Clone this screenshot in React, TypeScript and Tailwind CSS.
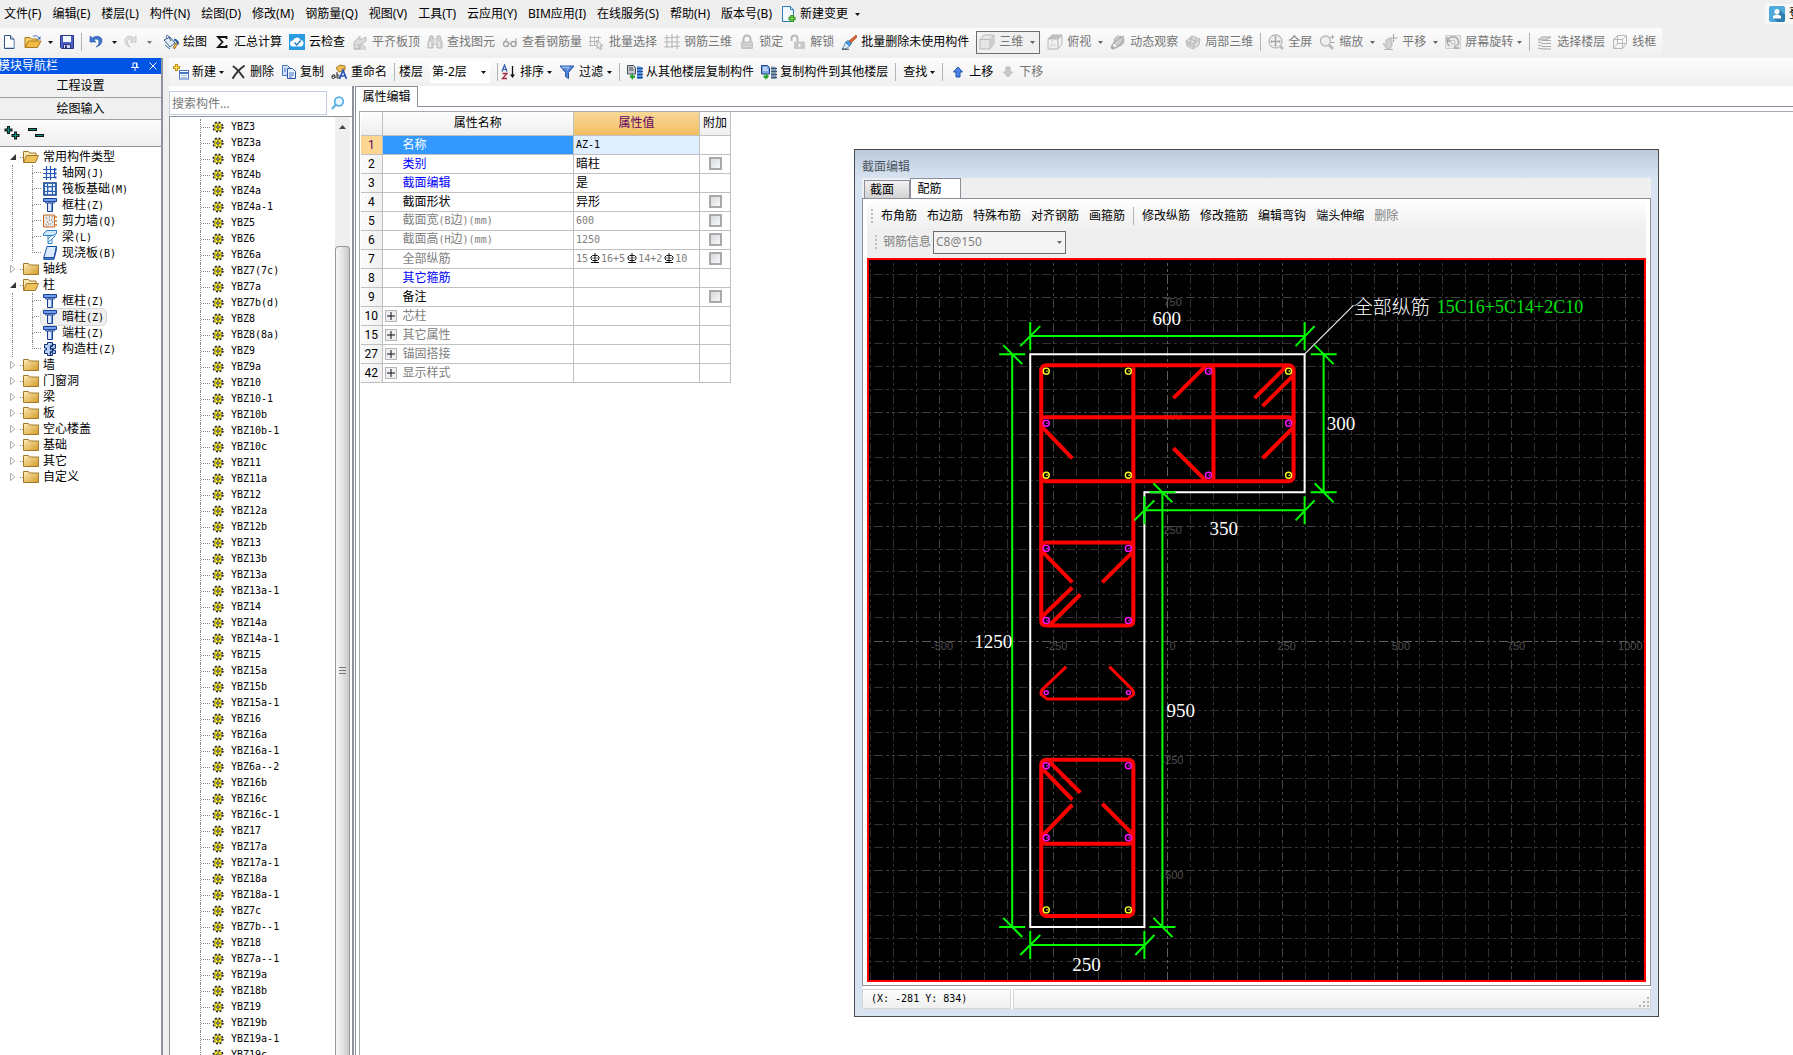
import React from "react";

const CJK = "font-['Noto_Sans','Noto_Sans_CJK_SC',sans-serif]";

/* ---------- shared helpers ---------- */

function Svg({ children, w = 16, h = 16, className = "" }: { children: React.ReactNode; w?: number; h?: number; className?: string }) {
  return (
    <svg width={w} height={h} viewBox={`0 0 ${w} ${h}`} className={`shrink-0 ${className}`} aria-hidden="true">
      {children}
    </svg>
  );
}

function Caret({ color = "#111" }: { color?: string }) {
  return (
    <Svg w={5} h={3}>
      <path d="M0 0h5L2.5 3z" fill={color} />
    </Svg>
  );
}

/* Half-width characters are set in a 6px wide monospace face beside 12px ideographs. */
function Mixed({ text }: { text: string }) {
  const runs = text.match(/[\x20-\x7e]+|[^\x20-\x7e]+/g) ?? [];
  return (
    <>
      {runs.map((r, i) =>
        r.charCodeAt(0) < 127 ? (
          <span key={i} className="font-['DejaVu_Sans_Mono',monospace] text-[10px]">{r}</span>
        ) : (
          <span key={i}>{r}</span>
        )
      )}
    </>
  );
}

function Sep() {
  return <span className="h-[18px] w-px shrink-0 bg-[#b4b4b4]" />;
}

function Grip() {
  return <span className="h-[15px] w-0.5 shrink-0 bg-[repeating-linear-gradient(180deg,#bdbdbd_0_2px,transparent_2px_4px)]" />;
}

/* ---------- icons ---------- */

const g = "#b9b9b9";
const I = {
  file: (
    <Svg>
      <path d="M2.5 1.5h6l3.5 3.5v9.500h-9.500z" fill="#fff" stroke="#31527f" />
      <path d="M3.500 13.500h8V6" fill="none" stroke="#b9d3ee" />
      <path d="M8.500 1.500V5H12" fill="#d6e5f5" stroke="#31527f" />
    </Svg>
  ),
  open: (
    <Svg w={18}>
      <path d="M1 13V3.500h5l1.500 1.500H13v3" fill="#f6cf6c" stroke="#a97817" />
      <path d="M1 13.500L4.500 7H17l-3.500 6.500z" fill="#f4b942" stroke="#a97817" />
      <path d="M9 2.500c3-1.500 5-.5 6 1.500" fill="none" stroke="#3f6fae" />
      <path d="M16.500 2v3.500H13z" fill="#3f6fae" />
    </Svg>
  ),
  save: (
    <Svg>
      <path d="M1.500 1.500h13v13h-12l-1-1z" fill="#4d5fc9" stroke="#2a357f" />
      <path d="M4 2h8v6H4z" fill="#f2f6ff" />
      <path d="M4.500 10.500h7v4h-7z" fill="#cfd6ee" stroke="#2a357f" />
      <path d="M6 11.500h2v3H6z" fill="#2a357f" />
    </Svg>
  ),
  undo: (
    <Svg>
      <path d="M2 2v6h6L5.800 5.900C8 4.300 11 5 11 8c0 2-1 3.500-3 5 4-1.200 6-3.500 6-6.500C14 2.500 8.500.800 4.300 4z" fill="#3f74cf" stroke="#27539f" strokeWidth=".6" />
    </Svg>
  ),
  redo: (
    <Svg>
      <path d="M13 2v6H7l2.200-2.100C7 4.300 4.500 5 4.500 8c0 2 1 3.500 2.500 5-3.500-1.200-5-3.500-5-6.500C2 2.500 7 .800 10.700 4z" fill="#e2e2e2" stroke="#bcbcbc" strokeWidth=".8" />
    </Svg>
  ),
  draw: (
    <Svg>
      <path d="M1 6l6-3 5 6-5 4z" fill="#dfeaf7" stroke="#38618f" />
      <path d="M4 5C2 1 5 0 6 3l2 4" fill="none" stroke="#38618f" />
      <path d="M10 14l4-7 1.500 1-3.500 6.500z" fill="#f4b942" stroke="#7a571b" strokeWidth=".7" />
      <path d="M11 5.500c3 .5 4 2 4 5" fill="none" stroke="#2b5fa8" strokeWidth="2" />
      <path d="M2 11l5 4" stroke="#38618f" />
    </Svg>
  ),
  sigma: (
    <Svg>
      <path d="M12.500 5V3H4l4.500 5L4 13h8.500v-2" fill="none" stroke="#111" strokeWidth="1.800" />
    </Svg>
  ),
  cloud: (
    <Svg>
      <rect width="16" height="16" fill="#2a9be0" />
      <path d="M4 12.500a3 3 0 010-6 4 4 0 017.500-.5 3.300 3.300 0 01.5 6.500z" fill="#fff" />
      <path d="M5.500 8.500l2.200 2.500 4-4.500" fill="none" stroke="#1b79bd" strokeWidth="1.300" />
    </Svg>
  ),
  slab: (
    <Svg>
      <path d="M2 8l6-6v4l6-3v4L8 11v4H2z" fill="#dcdcdc" stroke={g} />
      <path d="M2 15h12M4 11h8M6 13h8" stroke={g} />
    </Svg>
  ),
  binoc: (
    <Svg>
      <path d="M3 2h3v3h4V2h3l2 7v5h-5v-4H6v4H1V9z" fill="#d2d2d2" stroke={g} />
      <path d="M3 8v5M12 8v5M8 5v5" stroke="#fff" />
    </Svg>
  ),
  glasses: (
    <Svg>
      <circle cx="4" cy="10" r="2.500" fill="none" stroke="#a5a5a5" strokeWidth="1.400" />
      <circle cx="11.500" cy="10" r="2.500" fill="none" stroke="#a5a5a5" strokeWidth="1.400" />
      <path d="M6.500 9.500h2.500M1.800 9L5 4.500M14 9.500V4.500" fill="none" stroke="#a5a5a5" strokeWidth="1.200" />
    </Svg>
  ),
  batch: (
    <Svg>
      <path d="M1.500 2v10M5.500 2v10M9.500 2v5M0 3.500h12M0 7.500h8M0 11.500h7" stroke={g} />
      <path d="M8 6l6 6h-3l1.500 3-1.500.5L9.500 13 8 14.500z" fill="#eee" stroke="#aaa" />
    </Svg>
  ),
  grid: (
    <Svg>
      <path d="M3 1v13M8 0v14M13 1v14M0 4l16-1M0 8h16M0 13l16-1" fill="none" stroke={g} strokeWidth="1.200" />
    </Svg>
  ),
  lock: (
    <Svg>
      <path d="M4.500 8V5a3.500 3.500 0 017 0v3" fill="none" stroke={g} strokeWidth="2" />
      <rect x="2" y="7.500" width="12" height="7.500" rx="1" fill="#c4c4c4" />
      <path d="M3 10h10M3 12.500h10" stroke="#dedede" />
    </Svg>
  ),
  unlock: (
    <Svg>
      <path d="M1.500 7V4.500a3 3 0 016 0V8" fill="none" stroke={g} strokeWidth="2" />
      <rect x="4" y="7.500" width="11" height="7.500" rx="1" fill="#c9c9c9" />
      <path d="M9.500 10v3" stroke="#fff" strokeWidth="1.500" />
    </Svg>
  ),
  brush: (
    <Svg>
      <path d="M15 1L8 7l2 2 6-6z" fill="#e2622d" stroke="#8e3a1d" strokeWidth=".6" />
      <path d="M7 6.500l3.500 3-2 2.500-4-3.500z" fill="#4aa3e8" stroke="#225f9d" strokeWidth=".7" />
      <path d="M4.500 8.500l4 3.500c-2 2.500-4 3-7.500 3 2-2 2-4 3.500-6.500z" fill="#d9ecfb" stroke="#225f9d" strokeWidth=".7" />
      <path d="M1 15.300h7" stroke="#444" />
    </Svg>
  ),
  box: (
    <Svg>
      <path d="M1 5.500L5 1h10v9l-4 5H1z" fill="#e6e6e6" stroke={g} strokeLinejoin="round" />
      <path d="M1 5.500h10V15M11 5.500L15 1" fill="none" stroke={g} />
      <path d="M11 6l4-4v8l-4 5z" fill="#cdcdcd" />
    </Svg>
  ),
  topview: (
    <Svg>
      <path d="M1 5L5 1h10l-4 4z" fill="#c2c2c2" stroke={g} />
      <path d="M1 5h10v10H1zM11 5l4-4v9l-4 5" fill="#f0f0f0" stroke={g} />
      <path d="M5 6v5h6M5 11l-4 4" fill="none" stroke={g} strokeDasharray="1 1" />
    </Svg>
  ),
  orbit: (
    <Svg>
      <circle cx="9" cy="7" r="5" fill="#cfcfcf" stroke={g} />
      <path d="M1 14c1-4 6-9 13-12M2 15c5-1 10-5 12-11" fill="none" stroke="#a9a9a9" strokeWidth="1.300" />
      <path d="M1 15l1-4 3 3z" fill="#aaa" />
    </Svg>
  ),
  partial: (
    <Svg>
      <path d="M1 7l6-5 8 3-1 6-6 4-6-3z" fill="#dedede" stroke={g} />
      <path d="M4 4.500l8 3M2 9.500l7 3M7 2l-3 10M11 3.500L8 15M1 7l7 3 7-5" fill="none" stroke={g} />
    </Svg>
  ),
  full: (
    <Svg>
      <circle cx="7.500" cy="7.500" r="6.500" fill="#f1f1f1" stroke={g} strokeWidth="1.300" />
      <path d="M7.500 3v9M3 7.500h9" stroke="#a5a5a5" strokeWidth="1.300" />
      <path d="M7.500 2L9 4H6zM7.500 13L9 11H6zM2 7.500L4 6v3zM13 7.500L11 6v3z" fill="#a5a5a5" />
      <path d="M12 12l3 3" stroke={g} strokeWidth="2.500" />
    </Svg>
  ),
  zoom: (
    <Svg>
      <circle cx="6.500" cy="7" r="5" fill="#f1f1f1" stroke={g} strokeWidth="1.400" />
      <path d="M10 11l4 4" stroke={g} strokeWidth="2.500" />
      <path d="M11.500 3h4M13.500 1v4M11.500 8.500h4" stroke="#a5a5a5" />
    </Svg>
  ),
  pan: (
    <Svg>
      <path d="M1 10c2-1 2 1 3 1V6l2-1 1-.5 2 .5 1 2v4l-2 4H5z" fill="#d2d2d2" stroke={g} />
      <path d="M11.500 0v8M7.500 4h8" stroke="#a5a5a5" />
      <path d="M2 15.500h9" stroke={g} />
    </Svg>
  ),
  rotate: (
    <Svg>
      <path d="M.5 1.500h15v13H.5z" fill="#eaeaea" stroke="#cfcfcf" />
      <path d="M4.500 12A5 5 0 018 3a5 5 0 013.500 9" fill="none" stroke="#a5a5a5" strokeWidth="1.300" />
      <path d="M2 3v4h4M14 14h-4v-3.500" fill="none" stroke="#a5a5a5" strokeWidth="1.300" />
      <circle cx="8" cy="8" r="1.800" fill="#fff" stroke={g} />
    </Svg>
  ),
  floors: (
    <Svg>
      <path d="M5 3h9L9 6H1zM14 6.500H5M14 9.500H5M14 12.500H5M1 8l4 1M1 11l4 1M1 14l4 1h9" fill="#dadada" stroke="#a9a9a9" />
    </Svg>
  ),
  wire: (
    <Svg>
      <path d="M1.500 5.500L5.500 1.500h9v8l-4 5h-9zM1.500 5.500h9v9M10.500 5.500l4-4M5.500 1.500v8h9M5.500 9.500l-4 5" fill="none" stroke={g} />
    </Svg>
  ),
  newItem: (
    <Svg>
      <path d="M3.500 0v7M0 3.500h7" stroke="#b98510" strokeWidth="3" />
      <path d="M3.500 .8v5.400M.8 3.500h5.400" stroke="#ffdb4d" strokeWidth="1.400" />
      <rect x="6.500" y="6.500" width="9" height="8.500" fill="#fff" stroke="#4a76c2" />
      <path d="M7 9h8" stroke="#4a76c2" strokeWidth="2" />
      <path d="M8 11.500h6M8 13.500h6" stroke="#9ebbe5" />
    </Svg>
  ),
  del: (
    <Svg>
      <path d="M2.500 2.500C6 5 9 8.500 12.500 13.500M13 2C8 5.500 5 9 2 14" fill="none" stroke="#333" strokeWidth="2" strokeLinecap="round" />
    </Svg>
  ),
  copy: (
    <Svg>
      <path d="M1.500 1.500h5l3 3v7h-8z" fill="#cfe0f7" stroke="#4a76c2" />
      <path d="M6.500 4.500h5l3 3v7h-8z" fill="#e9f2ff" stroke="#2b56a6" />
      <path d="M8 9h5M8 11h5M8 13h3M3 5h2M3 7h2" stroke="#4a76c2" />
    </Svg>
  ),
  rename: (
    <Svg>
      <path d="M5 4l4-3 5 1v4l-6 2z" fill="#f3bd4c" stroke="#8e6415" strokeWidth=".8" />
      <path d="M1 13c0-3 3-3 3-1v2M4 12c-2 0-3 0-3 1.500S3.500 15 4 13M6 8v6c3 1 3-4 0-3" fill="none" stroke="#222" />
      <path d="M8.500 15L12 6l3.500 9M9.500 12h5" fill="none" stroke="#2b56b6" strokeWidth="1.700" />
    </Svg>
  ),
  sort: (
    <Svg>
      <path d="M1 7.500L3.500 1 6 7.500M2 5.500h3" fill="none" stroke="#2c56a8" strokeWidth="1.200" />
      <path d="M1.500 9.500H6l-4.500 5H6" fill="none" stroke="#a02a3c" strokeWidth="1.300" />
      <path d="M11.500 2v10" stroke="#111" strokeWidth="1.300" />
      <path d="M9 10.500h5L11.500 14z" fill="#111" />
    </Svg>
  ),
  filter: (
    <Svg>
      <path d="M1 2h14L9.500 8.500v6l-3-2v-4z" fill="#4f86dc" stroke="#2b56a6" strokeLinejoin="round" />
      <path d="M3 3.200h7L8 6" fill="none" stroke="#bcd5fb" />
    </Svg>
  ),
  copyFrom: (
    <Svg>
      <path d="M.5 1.500h6l2 2V10h-8z" fill="#c4c8cf" stroke="#4b4f58" />
      <path d="M2 4h4M2 6h5" stroke="#555" />
      <path d="M2.500 12.500L6 9v2.500h2v2.500H6V16z" fill="#28a22e" />
      <path d="M10 2l5 1v12h-5z" fill="#69a4e8" />
      <path d="M10 4.500h6M10 7.500h6M10 10.500h6M10 13.500h6" stroke="#1d4f9f" strokeWidth="1.300" />
    </Svg>
  ),
  copyTo: (
    <Svg>
      <path d="M.5 1.500h6l2 2V10h-8z" fill="#79a4e6" stroke="#1d3f88" />
      <path d="M2 4h4M2 6h5" stroke="#fff" />
      <path d="M8 12.500L4.500 9v2.500h-2v2.500h2V16z" fill="#28a22e" />
      <path d="M10 2l5 1v12h-5z" fill="#9fb1c7" />
      <path d="M10 4.500h6M10 7.500h6M10 10.500h6M10 13.500h6" stroke="#3d5676" strokeWidth="1.300" />
    </Svg>
  ),
  up: (
    <Svg>
      <path d="M8 3l4.500 5H10v5H6V8H3.500z" fill="#4e83e6" stroke="#1f4fae" strokeLinejoin="round" />
    </Svg>
  ),
  down: (
    <Svg>
      <path d="M8 13l4.500-5H10V3H6v5H3.500z" fill="#c9c9c9" stroke="#bcbcbc" strokeLinejoin="round" />
    </Svg>
  ),
  change: (
    <Svg>
      <path d="M1.500.5h8l3 3v12h-11z" fill="#f3f9ff" stroke="#2d7db8" />
      <path d="M9.500.5v3h3" fill="#cfe6f8" stroke="#2d7db8" />
      <path d="M11 9v7M7.500 12.500h7" stroke="#37941f" strokeWidth="3.500" />
      <path d="M11 10v5M8.500 12.500h5" stroke="#7ed957" strokeWidth="1.200" />
    </Svg>
  ),
  user: (
    <Svg>
      <rect width="16" height="16" rx="2" fill="#4ea9dc" />
      <path d="M10 3l6 6v5a2 2 0 01-2 2H8l-4-4z" fill="#2e7fb0" />
      <circle cx="8" cy="5.500" r="2.600" fill="#fff" />
      <path d="M4 12.500V10l3-1.500h2l3 1.500v2.500z" fill="#fff" />
    </Svg>
  ),
  folder: (
    <Svg>
      <defs>
        <linearGradient id="fold" x1="0" y1="0" x2="1" y2="1">
          <stop offset="0" stopColor="#fdeeb8" />
          <stop offset="1" stopColor="#d39a28" />
        </linearGradient>
      </defs>
      <path d="M.5 13.500v-11h5l1 1.500h9v9.500z" fill="url(#fold)" stroke="#a07a2a" />
    </Svg>
  ),
  folderOpen: (
    <Svg>
      <path d="M.5 13V2.500h5L6.500 4H13v3" fill="#fbe9ae" stroke="#a07a2a" />
      <path d="M.5 13.500L3.500 6.500h12l-3 7z" fill="#eec15a" stroke="#a07a2a" />
    </Svg>
  ),
  axis: (
    <Svg w={14} h={14}>
      <path d="M3.500 0v14M7.500 0v14M0 3.500h11M0 7.500h11M0 11.500h11M11.500 2v10" stroke="#2456b4" strokeWidth="1.200" />
      <path d="M12.500 2.500v2M12.500 6.500v2M12.500 10.500v2" stroke="#2456b4" strokeWidth="2" />
    </Svg>
  ),
  raft: (
    <Svg w={14} h={14}>
      <path d="M1 1h12v12H1z" fill="#e4eefc" stroke="#0e3f86" strokeWidth="1.600" />
      <path d="M4.500 1v12M9.500 1v12M1 4.500h12M1 9.500h12" fill="none" stroke="#2b62b0" />
      <path d="M5 5h4v4H5z" fill="#fff" stroke="#2b62b0" strokeWidth=".8" />
    </Svg>
  ),
  column: (
    <Svg w={14} h={14}>
      <path d="M.5.5h13v3H.5z" fill="#6f9ff0" stroke="#163f92" />
      <path d="M2.500 3.500h9v1.500h-9z" fill="#c7dcfb" stroke="#163f92" strokeWidth=".8" />
      <path d="M4.500 5h5v8.500h-5z" fill="#dbe8fd" stroke="#163f92" />
      <path d="M8.500 5.500v7.500" stroke="#6f9ff0" />
    </Svg>
  ),
  wall: (
    <Svg w={14} h={14}>
      <path d="M.5 1h11v12H.5z" fill="#e9e6e2" stroke="#c0692a" />
      <path d="M3 4h1M6 3h1M8 6h1M4 8h1M7 10h1M9 3h1M3 11h1M6 6h1M9 8h1M5 10h1" stroke="#777" />
      <path d="M11.500 3h2.500M11.500 7h2.500M11.500 11h2.500" stroke="#e07a24" strokeWidth="1.500" />
    </Svg>
  ),
  beam: (
    <Svg w={14} h={14}>
      <path d="M.5 3.500L4 .5h9.500v3L10 5.500H.5z" fill="#cfe6fb" stroke="#2c7cc4" />
      <path d="M5 5.500v8h4V9l3.500-3.500M5 9l3.500-3.500M5 12.500L9 9" fill="none" stroke="#2c7cc4" />
    </Svg>
  ),
  plate: (
    <Svg w={14} h={14}>
      <path d="M4 .5h9.500L11 11.500H.8z" fill="#dbe8fd" stroke="#1a4ca0" />
      <path d="M.8 11.500v2H11l2.500-10v-3L11 11.500z" fill="#3f74cf" stroke="#1a4ca0" strokeWidth=".8" />
    </Svg>
  ),
  tieColumn: (
    <Svg w={14} h={14}>
      <path d="M4.500.5h5v2h3v4h-2v2h2v3h-3v2h-5v-2h-3V8h2V6h-2V2.500h3z" fill="#b9d2f8" stroke="#0e2f76" />
      <path d="M9.500 1v3h-2v3h2v3h-2v3" fill="none" stroke="#0e2f76" strokeWidth="1.300" />
    </Svg>
  ),
  gear: (
    <Svg w={12} h={12}>
      <circle cx="6" cy="6" r="4.800" fill="none" stroke="#111" strokeWidth="1.600" strokeDasharray="1.885 1.885" />
      <circle cx="6" cy="6" r="4" fill="#ffee22" stroke="#444" strokeWidth=".5" />
      <path d="M6 2.500v1M6 8.500v1M2.500 6h1M8.500 6h1" stroke="#111" />
      <circle cx="6" cy="6" r="1.300" fill="#fff" stroke="#111" strokeWidth=".9" />
    </Svg>
  ),
};

type IconKey = keyof typeof I;

/* ---------- menu and tool bars ---------- */

const MENU = ["文件(F)", "编辑(E)", "楼层(L)", "构件(N)", "绘图(D)", "修改(M)", "钢筋量(Q)", "视图(V)", "工具(T)", "云应用(Y)", "BIM应用(I)", "在线服务(S)", "帮助(H)", "版本号(B)"];

function MenuBar() {
  return (
    <nav className="flex h-7 shrink-0 items-center justify-between bg-[#efefef] pl-1">
      <div className="flex items-center gap-[11px]">
        {MENU.map((m) => (
          <button key={m} className="whitespace-nowrap">{m}</button>
        ))}
        <button className="-ml-0.5 flex items-center gap-[3px] whitespace-nowrap">
          {I.change}
          <span>新建变更</span>
          <span className="pl-1"><Caret /></span>
        </button>
      </div>
      <button className="flex w-7 items-center gap-1 overflow-hidden bg-[#f8f8f8] py-0.5 pl-1 whitespace-nowrap">
        {I.user}
        <span>登录</span>
      </button>
    </nav>
  );
}

type ToolProps = { icon?: IconKey; label: string; off?: boolean; drop?: boolean; near?: boolean; wide?: boolean };

function Tool({ icon, label, off, drop, near, wide }: ToolProps) {
  return (
    <button disabled={off} className={`flex shrink-0 items-center whitespace-nowrap ${wide ? "gap-1" : "gap-[3px]"} ${off ? "text-[#767676]" : "text-black"}`}>
      {icon && I[icon]}
      <span>{label}</span>
      {drop && <span className={near ? "" : "pl-[3px]"}><Caret color={off ? "#666" : "#111"} /></span>}
    </button>
  );
}

function MainToolbar() {
  return (
    <div className="flex h-[30px] shrink-0 items-center bg-[#efefef]">
      <div className="flex h-[28px] items-center self-start bg-linear-to-b from-[#fcfcfc] to-[#f0f0f0] pr-1.5">
        <div className="flex w-40 shrink-0 items-center pl-0.5">
          <button aria-label="新建">{I.file}</button>
          <button aria-label="打开" className="ml-1.5 flex items-center gap-1.5">{I.open}<Caret /></button>
          <button aria-label="保存" className="mx-1.5">{I.save}</button>
          <Sep />
          <button aria-label="撤销" className="ml-1.5 flex items-center gap-2">{I.undo}<Caret /></button>
          <button aria-label="恢复" className="ml-1.5 flex items-center gap-2">{I.redo}<Caret color="#777" /></button>
        </div>
        <div className="flex items-center gap-[7px] pl-[3px]">
          <Tool wide icon="draw" label="绘图" />
          <Tool wide icon="sigma" label="汇总计算" />
          <Tool wide icon="cloud" label="云检查" />
          <Tool wide icon="slab" label="平齐板顶" off />
          <Tool wide icon="binoc" label="查找图元" off />
          <Tool wide icon="glasses" label="查看钢筋量" off />
          <Tool wide icon="batch" label="批量选择" off />
          <Tool wide icon="grid" label="钢筋三维" off />
          <Tool wide icon="lock" label="锁定" off />
          <Tool wide icon="unlock" label="解锁" off />
          <Tool wide icon="brush" label="批量删除未使用构件" />
          <div className="flex h-[23px] items-center border border-[#6e6e6e] bg-[#f0f0f0] pr-1 pl-0.5">
            <Tool wide icon="box" label="三维" off drop />
          </div>
          <Tool wide icon="topview" label="俯视" off drop />
          <Tool wide icon="orbit" label="动态观察" off />
          <Tool wide icon="partial" label="局部三维" off />
          <Sep />
          <Tool wide icon="full" label="全屏" off />
          <Tool wide icon="zoom" label="缩放" off drop />
          <Tool wide icon="pan" label="平移" off drop />
          <Tool wide icon="rotate" label="屏幕旋转" off drop near />
          <Sep />
          <Tool wide icon="floors" label="选择楼层" off />
          <Tool wide icon="wire" label="线框" off />
        </div>
      </div>
    </div>
  );
}

function ComponentToolbar() {
  return (
    <div className="flex h-7 shrink-0 items-center gap-[7px] bg-linear-to-b from-[#fcfcfc] to-[#f0f0f0] pl-1">
      <Tool icon="newItem" label="新建" drop near />
      <Tool icon="del" label="删除" />
      <Tool icon="copy" label="复制" />
      <Tool wide icon="rename" label="重命名" />
      <Sep />
      <div className="-ml-[3px] flex items-center gap-[7px]">
        <label htmlFor="floor">楼层</label>
        <div className="relative flex items-center">
          <select id="floor" className="h-[22px] w-[60px] appearance-none bg-white pl-0.5">
            <option>第-2层</option>
          </select>
          <span className="pointer-events-none absolute right-1"><Caret /></span>
        </div>
      </div>
      <Sep />
      <div className="-ml-1"><Tool icon="sort" label="排序" drop near /></div>
      <Tool wide icon="filter" label="过滤" drop near />
      <Sep />
      <Tool icon="copyFrom" label="从其他楼层复制构件" />
      <Tool icon="copyTo" label="复制构件到其他楼层" />
      <Sep />
      <Tool label="查找" drop near />
      <Sep />
      <Tool icon="up" label="上移" />
      <Tool icon="down" label="下移" off />
    </div>
  );
}

/* ---------- module navigator ---------- */

type Node = { label: string; icon?: IconKey; open?: boolean; selected?: boolean; last?: boolean };
const TREE: Node[] = [
  { label: "常用构件类型", open: true },
  { label: "轴网(J)", icon: "axis" },
  { label: "筏板基础(M)", icon: "raft" },
  { label: "框柱(Z)", icon: "column" },
  { label: "剪力墙(Q)", icon: "wall" },
  { label: "梁(L)", icon: "beam" },
  { label: "现浇板(B)", icon: "plate", last: true },
  { label: "轴线" },
  { label: "柱", open: true },
  { label: "框柱(Z)", icon: "column" },
  { label: "暗柱(Z)", icon: "column", selected: true },
  { label: "端柱(Z)", icon: "column" },
  { label: "构造柱(Z)", icon: "tieColumn", last: true },
  { label: "墙" },
  { label: "门窗洞" },
  { label: "梁" },
  { label: "板" },
  { label: "空心楼盖" },
  { label: "基础" },
  { label: "其它" },
  { label: "自定义" },
];

function TreeRow({ node }: { node: Node }) {
  if (node.icon) {
    return (
      <li className="flex h-4 items-center">
        <span className="ml-3 h-full w-5 shrink-0 border-l border-dotted border-[#888]" />
        <span className="flex h-full w-[9px] shrink-0 flex-col">
          <span className="h-1/2 border-b border-l border-dotted border-[#888]" />
          <span className={`h-1/2 ${node.last ? "" : "border-l border-dotted border-[#888]"}`} />
        </span>
        <span className={`flex h-4 items-center gap-[5px] rounded-sm px-0.5 whitespace-nowrap ${node.selected ? "bg-[#f0f0f0] outline outline-[#d9d9d9]" : ""}`}>
          {I[node.icon]}
          <span><Mixed text={node.label} /></span>
        </span>
      </li>
    );
  }
  return (
    <li className="flex h-4 items-center">
      <span className="flex w-5 shrink-0 justify-end pr-1">
        <Svg w={6} h={8}>
          {node.open ? <path d="M6 1v6H0z" fill="#333" /> : <path d="M.5.5v7L5 4z" fill="#fff" stroke="#aaa" />}
        </Svg>
      </span>
      <span className="w-[3px] shrink-0 border-b border-dotted border-[#888]" />
      {node.open ? I.folderOpen : I.folder}
      <span className="pl-1 whitespace-nowrap"><Mixed text={node.label} /></span>
    </li>
  );
}

function Navigator() {
  return (
    <aside className="flex w-[163px] shrink-0 flex-col border-r-2 border-[#8d929c] bg-white">
      <header className="flex h-4 shrink-0 items-center justify-between overflow-hidden bg-[#0054e3] text-white">
        <span className="-ml-0.5 text-[12px] leading-[16px]">模块导航栏</span>
        <span className="flex items-center gap-2.5 pr-1">
          <button aria-label="固定">
            <Svg w={8} h={9}><path d="M2 1h4v4M2 1v4M0 5.500h8M4 5v4M5.500 1v4" fill="none" stroke="#fff" /></Svg>
          </button>
          <button aria-label="关闭">
            <Svg w={8} h={8}><path d="M.5.5l7 7M7.500.5l-7 7" stroke="#fff" /></Svg>
          </button>
        </span>
      </header>
      <button className="mt-px h-[23px] shrink-0 border-b border-[#a0a0a0] bg-[#f0f0f0]">工程设置</button>
      <button className="h-[22px] shrink-0 border-b border-[#a0a0a0] bg-[#f0f0f0]">绘图输入</button>
      <div className="flex h-[27px] shrink-0 items-center gap-2 border-b border-[#8d929c] bg-linear-to-b from-[#fcfcfc] to-[#f0f0f0] pl-1">
        <button aria-label="全部展开">
          <Svg w={16}>
            <path d="M4.500 1v8M.5 5h8M11.500 6.500v8M7.500 10.500h8" stroke="#111" strokeWidth="3" />
            <path d="M4.500 2v6M1.500 5h6M11.500 7.500v6M8.500 10.500h6" stroke="#0f8f86" strokeWidth="1.200" />
          </Svg>
        </button>
        <button aria-label="全部折叠">
          <Svg w={16}>
            <path d="M0 4.500h9M7 10.500h9" stroke="#111" strokeWidth="3" />
            <path d="M1 4.500h7M8 10.500h7" stroke="#0f8f86" strokeWidth="1.200" />
          </Svg>
        </button>
      </div>
      <ul className="pt-0.5">
        {TREE.map((n, i) => (
          <TreeRow key={i} node={n} />
        ))}
      </ul>
    </aside>
  );
}

/* ---------- component list ---------- */

const COMPONENTS = "3 3a 4 4b 4a 4a-1 5 6 6a 7(7c) 7a 7b(d) 8 8(8a) 9 9a 10 10-1 10b 10b-1 10c 11 11a 12 12a 12b 13 13b 13a 13a-1 14 14a 14a-1 15 15a 15b 15a-1 16 16a 16a-1 6a--2 16b 16c 16c-1 17 17a 17a-1 18a 18a-1 7c 7b--1 18 7a--1 19a 18b 19 19b 19a-1 19c"
  .split(" ")
  .map((s) => "YBZ" + s);

function ComponentList() {
  return (
    <section className="flex w-[185px] shrink-0 flex-col border-r-2 border-[#8d929c]">
      <div className="flex h-[30px] shrink-0 items-center pt-1">
        <input aria-label="搜索构件" placeholder="搜索构件..." className="h-6 w-[158px] border border-[#c3cfe0] bg-white pl-0.5 placeholder:text-[#777]" />
        <button aria-label="搜索" className="pl-1">
          <Svg w={14} h={14}>
            <circle cx="8" cy="5.500" r="4.300" fill="#eaf6ff" stroke="#5bb0e8" strokeWidth="1.800" />
            <path d="M5 8.500L1 13" stroke="#5bb0e8" strokeWidth="2.200" />
          </Svg>
        </button>
      </div>
      <div className="flex min-h-0 flex-1 border-t border-l border-[#8d929c] bg-white">
        <ul className="min-w-0 flex-1 overflow-hidden pt-0.5 pl-[30px]">
          {COMPONENTS.map((c) => (
            <li key={c} className="flex h-4 items-center border-l border-dotted border-[#888]">
              <span className="mr-0.5 w-[9px] border-b border-dotted border-[#888]" />
              {I.gear}
              <span className="pl-[7px] font-['DejaVu_Sans_Mono',monospace] text-[10px] whitespace-nowrap">{c}</span>
            </li>
          ))}
        </ul>
        <div className="mr-0.5 flex w-[15px] shrink-0 flex-col items-center bg-[#efefef]">
          <span className="flex h-5 shrink-0 items-center">
            <Svg w={7} h={4}><path d="M3.500 0L7 4H0z" fill="#444" /></Svg>
          </span>
          <span className="h-[109px] shrink-0" />
          <span className="flex w-full flex-1 items-center justify-center rounded-t-sm border border-b-0 border-[#979797] bg-linear-to-r from-[#f6f6f6] via-[#e4e4e6] to-[#c9c9cd] pt-10">
            <Svg w={7} h={8}><path d="M0 .5h7M0 3.500h7M0 6.500h7" stroke="#777" /></Svg>
          </span>
        </div>
      </div>
    </section>
  );
}

/* ---------- property table ---------- */

function RebarMark() {
  return (
    <Svg w={13} h={11}>
      <path d="M4.500 2.500h5l1.500 1.500v2L9.500 7.500h-5L3 6V4zM7 0v10M3 9.500h8" fill="none" stroke="#111" />
      <path d="M4 5h6" stroke="#111" strokeWidth=".6" />
    </Svg>
  );
}

type Row = { no: number; name: string; value?: string; tone: "key" | "plain" | "dim"; box?: boolean; expand?: boolean };
const ROWS: Row[] = [
  { no: 1, name: "名称", value: "AZ-1", tone: "plain" },
  { no: 2, name: "类别", value: "暗柱", tone: "key", box: true },
  { no: 3, name: "截面编辑", value: "是", tone: "key" },
  { no: 4, name: "截面形状", value: "异形", tone: "plain", box: true },
  { no: 5, name: "截面宽(B边)(mm)", value: "600", tone: "dim", box: true },
  { no: 6, name: "截面高(H边)(mm)", value: "1250", tone: "dim", box: true },
  { no: 7, name: "全部纵筋", value: "15|16+5|14+2|10", tone: "dim", box: true },
  { no: 8, name: "其它箍筋", tone: "key" },
  { no: 9, name: "备注", tone: "plain", box: true },
  { no: 10, name: "芯柱", tone: "dim", expand: true },
  { no: 15, name: "其它属性", tone: "dim", expand: true },
  { no: 27, name: "锚固搭接", tone: "dim", expand: true },
  { no: 42, name: "显示样式", tone: "dim", expand: true },
];
const TONE = { key: "text-[#0000ff]", plain: "text-black", dim: "text-[#808080]" };

function PropertyTable() {
  return (
    <table className="w-[370px] table-fixed border-collapse leading-[16px]">
      <colgroup>
        <col className="w-[21px]" />
        <col />
        <col className="w-[126px]" />
        <col className="w-[31px]" />
      </colgroup>
      <thead>
        <tr className="h-[23px] bg-linear-to-b from-[#fdfdfd] to-[#efefef]">
          <th className="border-r border-b border-[#c0c0c0]" aria-label="序号" />
          <th className="border-r border-b border-[#c0c0c0] font-normal">属性名称</th>
          <th className="border-r border-b border-[#c0c0c0] bg-linear-to-b from-[#f7d797] to-[#f1bf60] font-normal text-[#600060]">属性值</th>
          <th className="border-r border-b border-[#c0c0c0] font-normal whitespace-nowrap">附加</th>
        </tr>
      </thead>
      <tbody>
        {ROWS.map((r, i) => (
          <tr key={r.no} className="h-[19px]">
            <td className={`border-r border-b border-[#c0c0c0] text-center font-['Roboto',sans-serif] ${i === 0 ? "bg-[#ffd592] text-[#600060]" : "bg-linear-to-r from-[#fbfbfb] to-[#f0f0f0]"}`}>{r.no}</td>
            <td className={`border-r border-b border-[#c0c0c0] ${i === 0 ? "bg-[#3399ff] text-white" : TONE[r.tone]}`}>
              <div className="flex h-[18px] items-center">
                <span className="flex w-5 shrink-0 pl-0.5">
                  {r.expand && (
                    <button aria-label={"展开" + r.name} className="border border-[#b5b5b5] bg-[#eef0f3]">
                      <Svg w={10} h={10}><path d="M5 1v8M1 5h8" stroke="#111" /></Svg>
                    </button>
                  )}
                </span>
                <span className="whitespace-nowrap"><Mixed text={r.name} /></span>
              </div>
            </td>
            <td className={`border-r border-b border-[#c0c0c0] pl-0.5 ${i === 0 ? "bg-[#dfefff]" : ""} ${r.tone === "dim" ? "text-[#808080]" : "text-black"}`}>
              <div className="flex h-[18px] items-center whitespace-nowrap">
                {(r.value ?? "").split("|").map((part, k) => (
                  <React.Fragment key={k}>
                    {k > 0 && <RebarMark />}
                    <span><Mixed text={part} /></span>
                  </React.Fragment>
                ))}
              </div>
            </td>
            <td className="border-r border-b border-[#c0c0c0]">
              {r.box && (
                <input type="checkbox" aria-label={r.name + " 附加"} className="mx-auto block size-[13px] appearance-none border-2 border-[#a9a9a9] bg-linear-to-br from-[#d6dade] to-[#f8f8f8]" />
              )}
            </td>
          </tr>
        ))}
      </tbody>
    </table>
  );
}

/* ---------- section drawing ---------- */

const STEP = 22.85;
const OX = 1167;
const OY = 640;
const range = (a: number, b: number) => Array.from({ length: b - a + 1 }, (_, i) => a + i);
const tone = (n: number) => (n === 0 ? "#5c5c5c" : n % 5 === 0 ? "#424242" : "#303030");

function HDim({ x1, x2, y }: { x1: number; x2: number; y: number }) {
  return (
    <path
      d={`M${x1} ${y}H${x2}M${x1} ${y - 14}v28M${x2} ${y - 14}v28M${x1 - 10} ${y + 10}l20-20M${x2 - 9} ${y + 10}l19-20`}
    />
  );
}
function VDim({ x, y1, y2 }: { x: number; y1: number; y2: number }) {
  return (
    <path
      d={`M${x} ${y1}V${y2}M${x - 13} ${y1}h26M${x - 13} ${y2}h26M${x - 9} ${y1 - 9}l19 19M${x - 9} ${y2 - 9}l19 19`}
    />
  );
}

const BARS: [number, number, string][] = [
  [1046, 371, "y"], [1128, 371, "y"], [1288, 371, "y"], [1046, 475, "y"], [1128, 475, "y"], [1288, 475, "y"],
  [1046, 909, "y"], [1128, 909, "y"],
  [1208, 371, "m"], [1046, 423, "m"], [1288, 423, "m"], [1208, 475, "m"],
  [1046, 548, "m"], [1128, 548, "m"], [1046, 620, "m"], [1128, 620, "m"],
  [1046, 765, "m"], [1128, 765, "m"], [1046, 837, "m"], [1128, 837, "m"],
];

function SectionDrawing() {
  return (
    <svg viewBox="869 260 776 719" preserveAspectRatio="xMinYMin slice" className="block h-full w-full bg-black" role="img" aria-label="截面配筋图">
      <g strokeDasharray="9 3 3 3 3 3" strokeWidth="1" shapeRendering="crispEdges">
        {range(-16, 14).map((n) => (
          <path key={n} d={`M850 ${Math.round(OY + n * STEP) + 0.5}H1645`} stroke={tone(n)} />
        ))}
        {range(-13, 20).map((n) => (
          <path key={n} d={`M${Math.round(OX + n * STEP) + 0.5} 251V980`} stroke={tone(n)} />
        ))}
      </g>
      <g fill="#505050" fontFamily="Liberation Sans, sans-serif" fontSize="11">
        <text x="1163" y="306">750</text>
        <text x="1163" y="420">500</text>
        <text x="1163" y="534">250</text>
        <text x="1161" y="763">-250</text>
        <text x="1161" y="878">-500</text>
        <text x="931" y="649">-500</text>
        <text x="1045" y="649">-250</text>
        <text x="1169" y="649">0</text>
        <text x="1277" y="649">250</text>
        <text x="1391" y="649">500</text>
        <text x="1506" y="649">750</text>
        <text x="1617" y="649">1000</text>
      </g>
      <path d="M1030 354H1304V492H1144V926H1030Z" fill="none" stroke="#fff" strokeWidth="2" />
      <path d="M1304 354L1353 305" stroke="#fff" />
      <g fill="none" stroke="#ff0000" strokeWidth="4">
        <rect x="1041" y="365" width="252" height="116" rx="5" />
        <path d="M1041 417H1288Q1293 417 1293 423M1213 481V371Q1213 365 1208 365" />
        <path d="M1133 367V620Q1133 625 1128 625H1046Q1041 625 1041 620V475" />
        <path d="M1041 548Q1041 542 1046 542H1128Q1133 542 1133 548" />
        <rect x="1041" y="759" width="92" height="156" rx="5" />
        <path d="M1041 838Q1041 843 1046 843H1128Q1133 843 1133 838" />
        <path d="M1173 398L1205 366M1254 398L1286 366M1262 406L1293 375M1041 426L1072 458M1173 448L1205 480M1262 458L1293 427" />
        <path d="M1042 551L1072 582M1132 552L1102 582M1042 616L1072 587M1050 624L1080 594" />
        <path d="M1043 769L1072 799M1049 761L1080 792M1042 835L1072 804M1102 803L1133 834" />
        <path d="M1066 666L1043 688Q1040 691 1041 694L1047 698.500H1127L1133 694Q1134 691 1131 688L1109 666" strokeWidth="3" />
      </g>
      <g fill="none" strokeWidth="1.400">
        {BARS.map(([x, y, c], i) => (
          <g key={i} stroke={c === "y" ? "#ffff20" : "#ff10ff"}>
            <circle cx={x} cy={y} r="3" />
            <path d={`M${x} ${y}h1.500`} />
          </g>
        ))}
        <circle cx="1046" cy="692" r="2" stroke="#ff10ff" />
        <circle cx="1128" cy="692" r="2" stroke="#ff10ff" />
      </g>
      <g fill="none" stroke="#00ff00" strokeWidth="2">
        <HDim x1={1030} x2={1304} y={336} />
        <HDim x1={1144} x2={1304} y={510} />
        <HDim x1={1030} x2={1144} y={944} />
        <VDim x={1012} y1={354} y2={926} />
        <VDim x={1162} y1={492} y2={926} />
        <VDim x={1323} y1={354} y2={492} />
      </g>
      <g fill="#fff" fontFamily="Liberation Serif, Noto Sans CJK SC, serif" fontSize="19">
        <text x="1152" y="325">600</text>
        <text x="974" y="647">1250</text>
        <text x="1166" y="716">950</text>
        <text x="1209" y="535">350</text>
        <text x="1326" y="430">300</text>
        <text x="1072" y="970">250</text>
        <text x="1353" y="314" fontWeight="300">全部纵筋</text>
      </g>
      <text x="1436" y="313" fill="#00e010" fontFamily="Liberation Serif, serif" fontSize="18">15C16+5C14+2C10</text>
    </svg>
  );
}

function SectionEditor() {
  return (
    <section
      aria-label="截面编辑"
      className="absolute top-[63px] right-[134px] bottom-[38px] left-[499px] flex flex-col border border-[#4a4a4a] bg-[#d7e3f1] px-[7px] pb-[7px]"
    >
      <header className="-mx-[7px] flex h-7 shrink-0 items-center bg-linear-to-b from-[#bccbdb] to-[#d7e3f1] pt-1.5 pl-[7px] text-[#4c5560]">截面编辑</header>
      <div className="flex h-5 shrink-0 items-end bg-[#efefef] pl-0.5" role="tablist">
        <button role="tab" aria-selected="false" className="h-[18px] w-[46px] border border-b-0 border-[#8c8e9a] bg-linear-to-b from-[#f2f2f2] to-[#d2d2d2] pr-2.5 leading-[17px]">截面</button>
        <button role="tab" aria-selected="true" className="h-5 w-[51px] border border-b-0 border-[#8c8e9a] bg-white pr-3 leading-[17px]">配筋</button>
      </div>
      <div className="flex min-h-0 flex-1 flex-col border border-[#8c8e9a] bg-white p-1 pt-[3px] pb-[3px]">
        <div className="shrink-0 bg-[#efefef]">
          <div className="flex h-7 items-center gap-2.5 bg-linear-to-b from-[#fdfdfd] to-[#efefef] pl-1 whitespace-nowrap">
            <span className="-mr-0.5 flex"><Grip /></span>
            <button>布角筋</button>
            <button>布边筋</button>
            <button>特殊布筋</button>
            <button>对齐钢筋</button>
            <button>画箍筋</button>
            <span className="-mx-0.5 flex"><Sep /></span>
            <button>修改纵筋</button>
            <button>修改箍筋</button>
            <button>编辑弯钩</button>
            <button>端头伸缩</button>
            <button disabled className="text-[#808080]">删除</button>
          </div>
          <div className="flex h-7 items-center pb-1 pl-2 text-[#808080]">
            <Grip />
            <label htmlFor="rebar" className="pl-1.5 whitespace-nowrap">钢筋信息</label>
            <div className="relative ml-0.5 flex items-center">
              <select id="rebar" disabled className="h-[23px] w-[133px] appearance-none border border-[#6e6e6e] bg-[#f4f4f4] pl-0.5 opacity-100">
                <option>C8@150</option>
              </select>
              <span className="pointer-events-none absolute right-1"><Caret color="#666" /></span>
            </div>
          </div>
        </div>
        <div className="min-h-0 flex-1 border-2 border-[#ff0000] bg-black">
          <SectionDrawing />
        </div>
      </div>
      <footer className="flex h-[23px] shrink-0 items-stretch gap-0.5 bg-white pt-[3px]">
        <span className="flex w-[149px] items-center border border-[#d5d5d5] bg-linear-to-b from-[#fdfdfd] to-[#f0f0f0] pl-2 font-['DejaVu_Sans_Mono',monospace] text-[10px]">(X: -281 Y: 834)</span>
        <span className="flex flex-1 items-end justify-end border border-[#d5d5d5] bg-linear-to-b from-[#fdfdfd] to-[#f0f0f0]">
          <Svg w={11} h={11}>
            <path d="M8 0h2v2H8zM4 4h2v2H4zM8 4h2v2H8zM0 8h2v2H0zM4 8h2v2H4zM8 8h2v2H8z" fill="#b5b5b5" />
          </Svg>
        </span>
      </footer>
    </section>
  );
}

/* ---------- page ---------- */

export default function App() {
  return (
    <div className={`flex h-screen w-full flex-col overflow-hidden bg-[#efefef] text-[12px] leading-[16px] text-black ${CJK}`}>
      <MenuBar />
      <MainToolbar />
      <div className="flex min-h-0 flex-1">
        <Navigator />
        <div className="ml-1.5 flex min-w-0 flex-1 flex-col bg-[#f0f0f0]">
          <ComponentToolbar />
          <div className="flex min-h-0 flex-1 bg-white">
            <ComponentList />
            <div className="relative ml-px flex min-w-0 flex-1 flex-col">
              <div className="flex h-[21px] shrink-0" role="tablist">
                <button role="tab" aria-selected="true" className="w-[63px] border border-b-0 border-[#8c8e9a] bg-white whitespace-nowrap">属性编辑</button>
                <span className="flex-1 border-b border-[#8c8e9a]" />
              </div>
              <div className="flex min-h-0 flex-1 border-l border-[#8c8e9a] pt-1 pl-[3px]">
                <div className="flex-1 border-t border-l border-[#a8a8ae] pl-px">
                  <PropertyTable />
                </div>
              </div>
              <SectionEditor />
            </div>
          </div>
        </div>
      </div>
    </div>
  );
}
